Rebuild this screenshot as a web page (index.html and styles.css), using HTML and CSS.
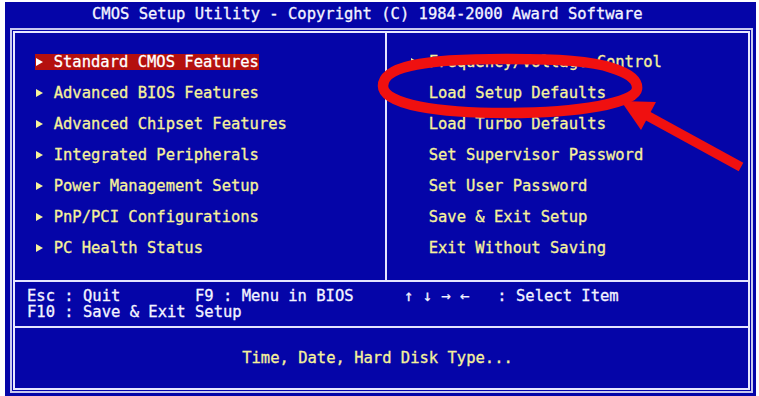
FILE: index.html
```html
<!DOCTYPE html>
<html>
<head>
<meta charset="utf-8">
<title>CMOS Setup Utility</title>
<link rel="stylesheet" href="styles.css">
</head>
<body>
<div class="screen">
  <div class="title">CMOS Setup Utility - Copyright (C) 1984-2000 Award Software</div>
  <div class="frame">
    <div class="inner">
      <div class="menu">
        <ul class="col left">
          <li><span class="item sel"><span class="arrow"></span>Standard CMOS Features</span></li>
          <li><span class="item"><span class="arrow"></span>Advanced BIOS Features</span></li>
          <li><span class="item"><span class="arrow"></span>Advanced Chipset Features</span></li>
          <li><span class="item"><span class="arrow"></span>Integrated Peripherals</span></li>
          <li><span class="item"><span class="arrow"></span>Power Management Setup</span></li>
          <li><span class="item"><span class="arrow"></span>PnP/PCI Configurations</span></li>
          <li><span class="item"><span class="arrow"></span>PC Health Status</span></li>
        </ul>
        <ul class="col right">
          <li><span class="item"><span class="arrow"></span>Frequency/Voltage Control</span></li>
          <li><span class="item plain">Load Setup Defaults</span></li>
          <li><span class="item plain">Load Turbo Defaults</span></li>
          <li><span class="item plain">Set Supervisor Password</span></li>
          <li><span class="item plain">Set User Password</span></li>
          <li><span class="item plain">Save &amp; Exit Setup</span></li>
          <li><span class="item plain">Exit Without Saving</span></li>
        </ul>
      </div>
      <div class="keys">
        <div class="krow"><span class="kl">Esc : Quit        F9 : Menu in BIOS</span><span class="kr">↑ ↓ → ←   : Select Item</span></div>
        <div class="krow"><span class="kl">F10 : Save &amp; Exit Setup</span></div>
      </div>
      <div class="status">Time, Date, Hard Disk Type...</div>
    </div>
  </div>
</div>
<svg class="mark" width="759" height="396" viewBox="0 0 759 396" xmlns="http://www.w3.org/2000/svg">
  <path d="M383,86 C383,67 420,59 505,59 C560,59 592,61 612,68 C631,74 638,81 637,89 C635,103 580,113 505,113 C440,113 383,105 383,86 Z" fill="none" stroke="#f01010" stroke-width="10.5"/>
  <line x1="741" y1="167" x2="646" y2="115" stroke="#f01010" stroke-width="9.5"/>
  <polygon points="621,101 656,102 641,130" fill="#f01010"/>
</svg>
</body>
</html>
```
FILE: styles.css
```css
* { box-sizing: border-box; }

body {
  margin: 0;
  background: #ffffff;
  position: relative;
  font-family: "DejaVu Sans Mono", "Liberation Mono", monospace;
  font-size: 15.5px;
}

.screen {
  margin: 2px 0 0 5px;
  width: 751px;
  height: 394px;
  background: #0505a8;
  overflow: hidden;
}

.title {
  height: 26px;
  line-height: 25px;
  padding-left: 87px;
  color: #f4f4ff;
  white-space: pre;
  -webkit-text-stroke: 0.3px currentColor;
}

.frame {
  margin-left: 5px;
  width: 743px;
  height: 365px;
  border: 2px solid #c9c9ef;
  padding: 1px;
}

.inner {
  height: 100%;
  border: 2px solid #e8e8ff;
  display: flex;
  flex-direction: column;
}

.menu {
  height: 249px;
  border-bottom: 2px solid #e4e4ff;
  display: flex;
}

.col {
  list-style: none;
  margin: 0;
  padding-top: 13px;
}

.col.left {
  width: 372px;
  padding-left: 20px;
  border-right: 2px solid #e4e4ff;
}

.col.right {
  flex: 1;
  padding-left: 23px;
}

.col li {
  height: 31.15px;
  display: flex;
  align-items: center;
}

.item {
  display: inline-flex;
  align-items: center;
  line-height: 16px;
  height: 16px;
  color: #f6f29a;
  white-space: pre;
  -webkit-text-stroke: 0.3px currentColor;
}

.item.plain {
  padding-left: 2ch;
}

.item.sel {
  background: #b4100e;
  color: #ffffff;
}

.arrow {
  display: inline-block;
  width: 2ch;
  height: 16px;
  position: relative;
}

.arrow::before {
  content: "";
  position: absolute;
  left: 1px;
  top: 4px;
  border-left: 7px solid currentColor;
  border-top: 4px solid transparent;
  border-bottom: 4px solid transparent;
}

.keys {
  height: 46px;
  border-bottom: 2px solid #e4e4ff;
  padding: 6px 0 0 12px;
  color: #f4f4ff;
  -webkit-text-stroke: 0.3px currentColor;
}

.krow {
  display: flex;
  line-height: 16px;
  height: 16px;
  white-space: pre;
}

.kl {
  width: 377px;
}

.status {
  flex: 1;
  display: flex;
  align-items: center;
  justify-content: center;
  padding-right: 8px;
  color: #f6f29a;
  white-space: pre;
  -webkit-text-stroke: 0.3px currentColor;
}

.mark {
  position: absolute;
  top: 0;
  left: 0;
  pointer-events: none;
}
```
